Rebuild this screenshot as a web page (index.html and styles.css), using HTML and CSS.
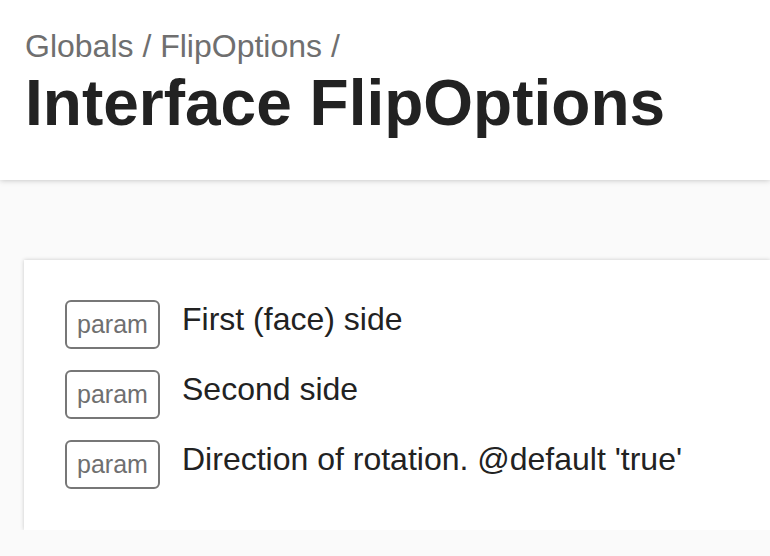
FILE: index.html
```html
<!DOCTYPE html>
<html>
<head>
<meta charset="utf-8">
<link rel="stylesheet" href="styles.css">
</head>
<body>
<header class="header">
  <div class="crumbs">Globals / FlipOptions /</div>
  <h1 class="title">Interface FlipOptions</h1>
</header>
<main class="content">
  <section class="card">
    <div class="row"><span class="tag">param</span><span class="desc">First (face) side</span></div>
    <div class="row"><span class="tag">param</span><span class="desc">Second side</span></div>
    <div class="row"><span class="tag">param</span><span class="desc">Direction of rotation. @default 'true'</span></div>
  </section>
</main>
</body>
</html>
```
FILE: styles.css
```css
html, body {
  margin: 0;
  padding: 0;
  background: #fafafa;
  font-family: "Liberation Sans", Arial, sans-serif;
  overflow: hidden;
}
.header {
  background: #fff;
  height: 180px;
  box-sizing: border-box;
  padding: 28px 25px 0;
  box-shadow: 0 0 6px rgba(0,0,0,0.25);
  position: relative;
  z-index: 1;
}
.crumbs {
  font-size: 32px;
  line-height: 36px;
  color: #6f6f6f;
}
.title {
  margin: 0;
  font-size: 64px;
  line-height: 78px;
  font-weight: bold;
  color: #222;
}
.content {
  padding: 80px 0 0 24px;
}
.card {
  background: #fff;
  box-shadow: 0 0 4px rgba(0,0,0,0.2);
  padding: 40px 41px 41px;
  display: flex;
  flex-direction: column;
  gap: 21px;
}
.row {
  display: flex;
  align-items: flex-start;
  gap: 22px;
}
.tag {
  box-sizing: border-box;
  width: 95px;
  height: 49px;
  border: 2px solid #777;
  border-radius: 6px;
  color: #6f6f6f;
  font-size: 25px;
  display: flex;
  align-items: center;
  justify-content: center;
  flex-shrink: 0;
}
.desc {
  font-size: 32px;
  line-height: 39px;
  color: #222;
}
```
